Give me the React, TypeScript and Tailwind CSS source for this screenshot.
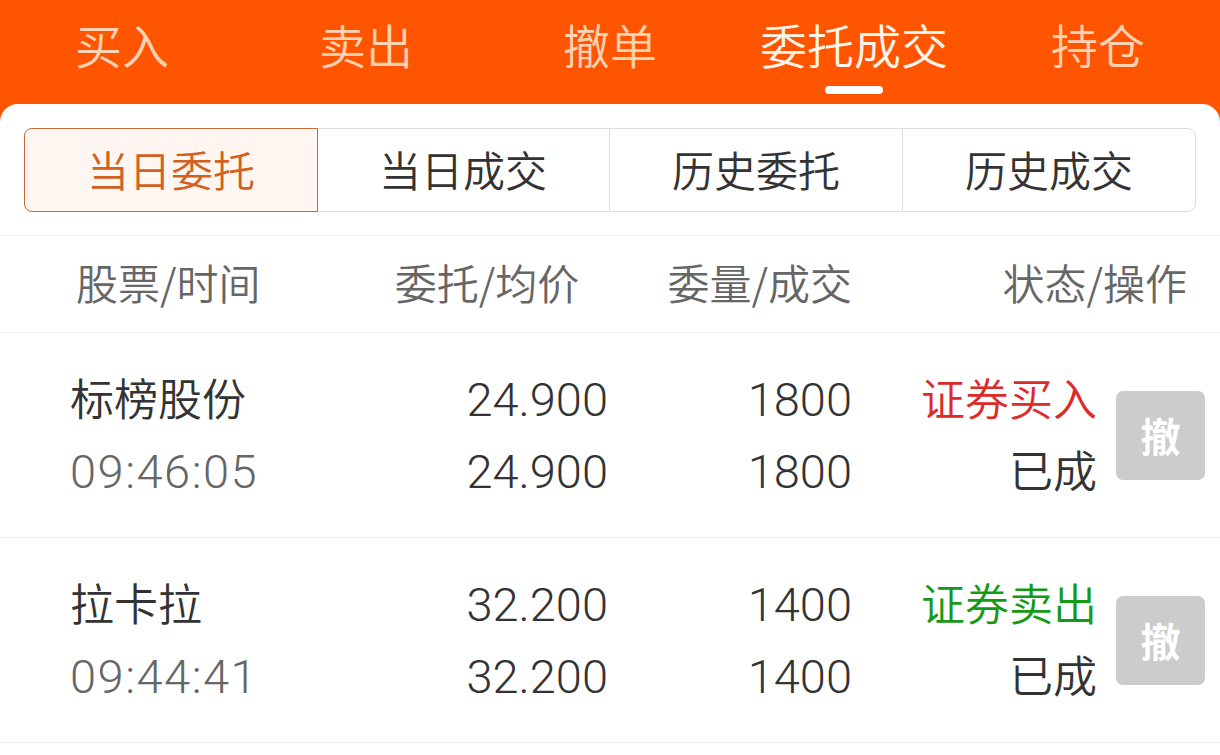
const navTabs = ["买入", "卖出", "撤单", "委托成交", "持仓"];
const segments = ["当日委托", "当日成交", "历史委托", "历史成交"];

type Order = {
  name: string;
  time: string;
  price: string;
  avg: string;
  qty: string;
  filled: string;
  side: string;
  buy: boolean;
  status: string;
};

const orders: Order[] = [
  { name: "标榜股份", time: "09:46:05", price: "24.900", avg: "24.900", qty: "1800", filled: "1800", side: "证券买入", buy: true, status: "已成" },
  { name: "拉卡拉", time: "09:44:41", price: "32.200", avg: "32.200", qty: "1400", filled: "1400", side: "证券卖出", buy: false, status: "已成" },
];

const font = { fontFamily: '"Noto Sans CJK SC", "Noto Sans", sans-serif' };
// numbers look like the Android system digits, Roboto is the closest
const num = { fontFamily: 'Roboto, "Noto Sans CJK SC", sans-serif' };

export default function App() {
  const activeTab = 3;
  const activeSeg = 0;

  return (
    <div className="w-[1220px] h-[755px] overflow-hidden bg-[#FF5500] font-[350]" style={font}>
      {/* top tabs */}
      <div className="grid grid-cols-5 h-[104px]">
        {navTabs.map((t, i) => (
          <div key={t} className="flex flex-col items-center pt-[16px]">
            <span
              className={
                "text-[47px] leading-[56px] " +
                (i === activeTab ? "text-[#FFF4EC]" : "text-[#FFD2B4]")
              }
            >
              {t}
            </span>
            {i === activeTab ? (
              <span className="mt-[14px] w-[58px] h-[8px] rounded-full bg-white" />
            ) : null}
          </div>
        ))}
      </div>

      {/* panel */}
      <div className="bg-white rounded-t-[18px] h-[651px]">
        <div className="px-[24px] pt-[24px] pb-[23px] border-b border-[#F0F0F0]">
          <div className="flex h-[84px] rounded-[8px] border border-[#DDDDDD]">
            {segments.map((s, i) => (
              <div
                key={s}
                className={
                  "flex-1 flex items-center justify-center text-[42px] leading-none pb-[3px] " +
                  (i === activeSeg
                    ? "bg-[#FFF6F2] text-[#D2601E] border border-[#C96A35] rounded-l-[8px] -m-px"
                    : "text-[#333333] " + (i < segments.length - 1 ? "border-r border-[#DDDDDD]" : ""))
                }
              >
                {s}
              </div>
            ))}
          </div>
        </div>

        {/* header */}
        <div className="flex items-center h-[97px] pb-[5px] border-b border-[#EEEEEE] text-[42px] leading-none text-[#666666]">
          <div className="w-[366px] pl-[76px]">股票/时间</div>
          <div className="w-[242px] text-center">委托/均价</div>
          <div className="w-[244px] text-right">委量/成交</div>
          <div className="w-[335px] text-right">状态/操作</div>
        </div>

        {orders.map((o) => (
          <div key={o.name} className="flex items-center h-[205px] pb-[4px] border-b border-[#EEEEEE] text-[44px] leading-[72px]">
            <div className="w-[366px] pl-[70px]">
              <div className="text-[#333333]">{o.name}</div>
              <div className="text-[#666666] text-[47px] tracking-[1.5px] translate-y-[3px]" style={num}>{o.time}</div>
            </div>
            <div className="w-[242px] mt-[6px] text-right text-[#333333] text-[47px]" style={num}>
              <div>{o.price}</div>
              <div>{o.avg}</div>
            </div>
            <div className="w-[244px] mt-[6px] text-right text-[#333333] text-[47px]" style={num}>
              <div>{o.qty}</div>
              <div>{o.filled}</div>
            </div>
            <div className="w-[245px] text-right">
              <div className={o.buy ? "text-[#DD2A2A]" : "text-[#149A14]"}>{o.side}</div>
              <div className="text-[#333333]">{o.status}</div>
            </div>
            <div className="ml-[19px] mt-[4px] w-[89px] h-[89px] rounded-[7px] bg-[#CCCCCC] flex items-center justify-center text-white text-[40px] font-bold">
              撤
            </div>
          </div>
        ))}
      </div>
    </div>
  );
}
